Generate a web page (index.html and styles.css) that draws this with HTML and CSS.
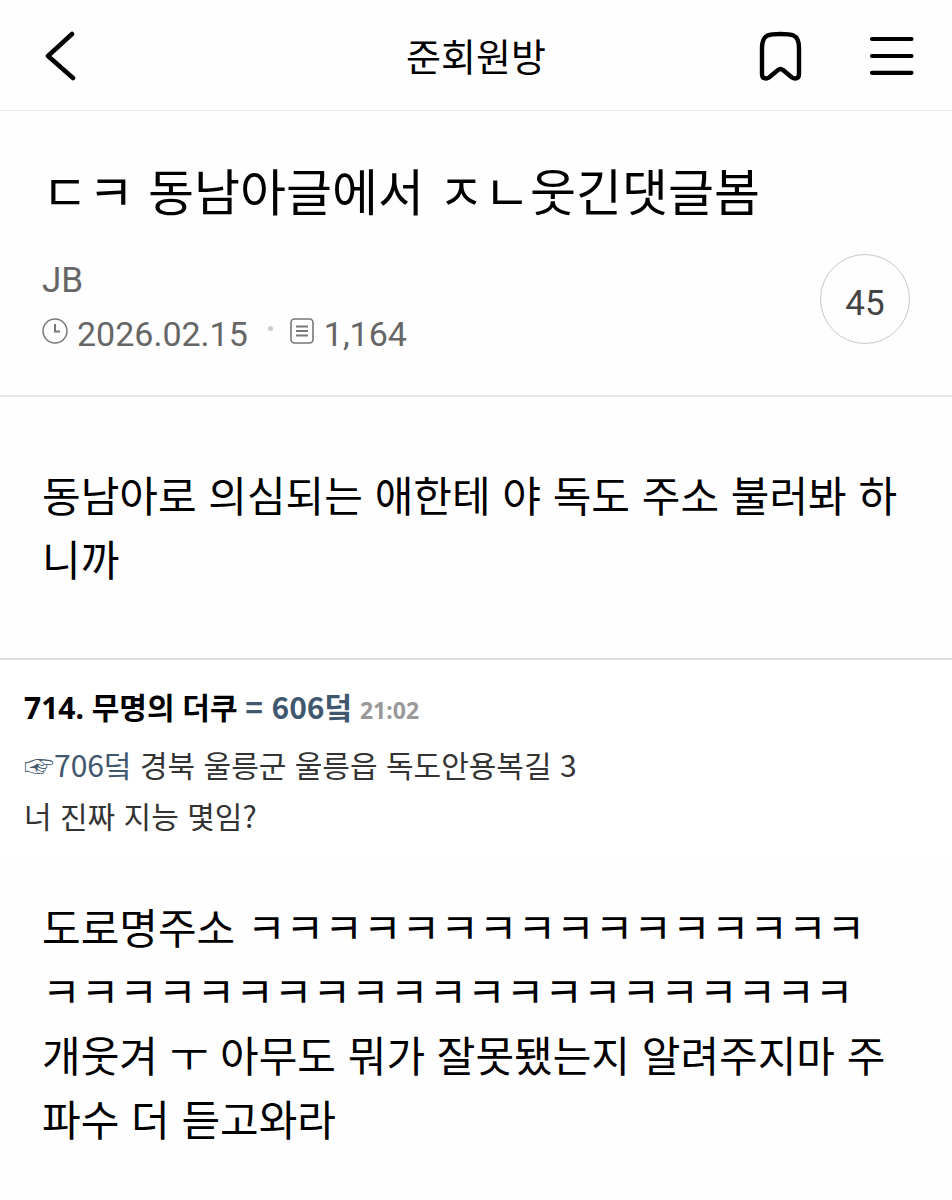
FILE: index.html
```html
<!DOCTYPE html>
<html lang="ko">
  <head>
    <meta charset="utf-8">
    <meta name="viewport" content="width=device-width, initial-scale=1.0">
    <title>준회원방</title>
    <link rel="stylesheet" href="styles.css">
  </head>
  <body>
    <header class="topBar">
      <button class="iconButton" type="button" aria-label="뒤로">
        <svg width="36" height="52" viewBox="0 0 36 52" fill="none" stroke="#000" stroke-width="4.500" stroke-linecap="round" stroke-linejoin="round"><path d="M30 5 6 27l25 22"/></svg>
      </button>
      <h2 class="boardName">준회원방</h2>
      <div class="topActions">
        <button class="iconButton" type="button" aria-label="북마크">
          <svg width="44" height="52" viewBox="0 0 44 52" fill="none" stroke="#000" stroke-width="4.4" stroke-linejoin="round"><path d="M4 45V19Q4 9 9.500 6.500Q13 5 22.500 5T35.500 6.500Q41 9 41 19V45Q41 49.500 37 49.500Q35.500 49.500 34 48.500L25 41Q22.500 39 20 41L11 48.500Q9.500 49.500 8 49.500Q4 49.500 4 45z"/></svg>
        </button>
        <button class="iconButton" type="button" aria-label="메뉴">
          <svg width="46" height="40" viewBox="0 0 46 40" stroke="#000" stroke-width="4.200" stroke-linecap="round"><path d="M4 4h39.500M4 21h39.500M4 37.800h39.500"/></svg>
        </button>
      </div>
    </header>
    <main>
      <section class="postHead">
        <h1 class="postTitle">ㄷㅋ 동남아글에서 ㅈㄴ웃긴댓글봄</h1>
        <div class="postInfo">
          <div>
            <p class="author">JB</p>
            <p class="meta">
              <svg class="metaIcon" width="26" height="32" viewBox="0 0 26 32" fill="none" stroke="#777"><circle cx="13" cy="13" r="12" stroke-width="1.500"/><path d="M13 6v7.500h5" stroke-width="2"/></svg>
              <span>2026.02.15</span>
              <i class="dot"></i>
              <svg class="metaIcon" width="26" height="32" viewBox="0 0 26 32" fill="none" stroke="#777" stroke-width="1.600"><rect x="2" y="1" width="22" height="24" rx="3.500"/><path d="M7 8.500h12M7 13h12M7 17.500h12" stroke-width="2"/></svg>
              <span>1,164</span>
            </p>
          </div>
          <button class="commentCount" type="button" aria-label="댓글 45">45</button>
        </div>
      </section>
      <p class="postText">동남아로 의심되는 애한테 야 독도 주소 불러봐 하니까</p>
      <section class="quote">
        <p class="quoteHead"><b>714. 무명의 더쿠</b> <b class="quoteMark">= 606덬</b> <b class="quoteTime">21:02</b></p>
        <p class="quoteText"><a class="reply" href="#706">☞706덬</a> 경북 울릉군 울릉읍 독도안용복길 3<br>너 진짜 지능 몇임?</p>
      </section>
      <p class="postText afterQuote">도로명주소 ㅋㅋㅋㅋㅋㅋㅋㅋㅋㅋㅋㅋㅋㅋㅋㅋㅋㅋㅋㅋㅋㅋㅋㅋㅋㅋㅋㅋㅋㅋㅋㅋㅋㅋㅋㅋㅋ<br>개웃겨 ㅜ 아무도 뭐가 잘못됐는지 알려주지마 주파수 더 듣고와라</p>
    </main>
  </body>
</html>
```
FILE: styles.css
```css
*{
  box-sizing: border-box;
}
body{
  margin: 0;
  background-color: #fefefe;
  color: #000;
  font-family: "Noto Sans CJK KR", sans-serif;
}
h1, h2, p{
  margin: 0;
  font-weight: 400;
}
button{
  font: inherit;
}
.topBar{
  display: grid;
  grid-template-columns: 1fr auto 1fr;
  align-items: center;
  height: 111px;
  padding: 0 38px;
  border-bottom: 1px solid #e8e8e8;
}
.iconButton{
  display: flex;
  justify-self: start;
  padding: 0;
  border: 0;
  background: none;
}
.topBar > .iconButton{
  padding-left: 4px;
}
.boardName{
  font-size: 38px;
  line-height: 56px;
}
.topActions{
  display: flex;
  justify-content: flex-end;
  align-items: center;
  gap: 66px;
}
.postHead{
  padding: 40px 42px 35px;
  border-bottom: 2px solid #e8e8e8;
}
.postTitle{
  font-size: 50px;
  line-height: 76px;
}
.postInfo{
  display: flex;
  justify-content: space-between;
  align-items: flex-start;
  margin-top: 27px;
  color: #666;
  font-family: Roboto, sans-serif;
  font-size: 35px;
}
.author{
  line-height: 54px;
}
.meta{
  display: flex;
  align-items: center;
  gap: 9px;
  font-size: 34px;
  line-height: 52px;
}
.dot{
  width: 5px;
  height: 5px;
  margin: 0 7px 12px 11px;
  border-radius: 50%;
  background-color: #ccc;
}
.commentCount{
  width: 90px;
  height: 90px;
  padding: 8px 0 0;
  border: 1px solid #c8c8c8;
  border-radius: 50%;
  background: none;
  color: #444;
}
.postText{
  padding: 65px 50px 68px 42px;
  font-size: 42px;
  line-height: 64px;
  word-break: break-all;
}
.quote{
  padding: 18px 24px 20px;
  border-top: 2px solid #e0e0e0;
  background-color: white;
  color: #333;
  font-size: 30px;
}
.quoteHead{
  color: #000;
  font-family: "Noto Sans", "Noto Sans CJK KR", sans-serif;
  line-height: 57px;
}
.quoteMark, .reply{
  color: #3f5870;
  font-family: "Noto Sans CJK KR", sans-serif;
  text-decoration: none;
}
.quoteTime{
  color: #999;
  font-size: 23px;
}
.quoteText{
  line-height: 51px;
}
.afterQuote{
  padding-top: 33px;
}
```
